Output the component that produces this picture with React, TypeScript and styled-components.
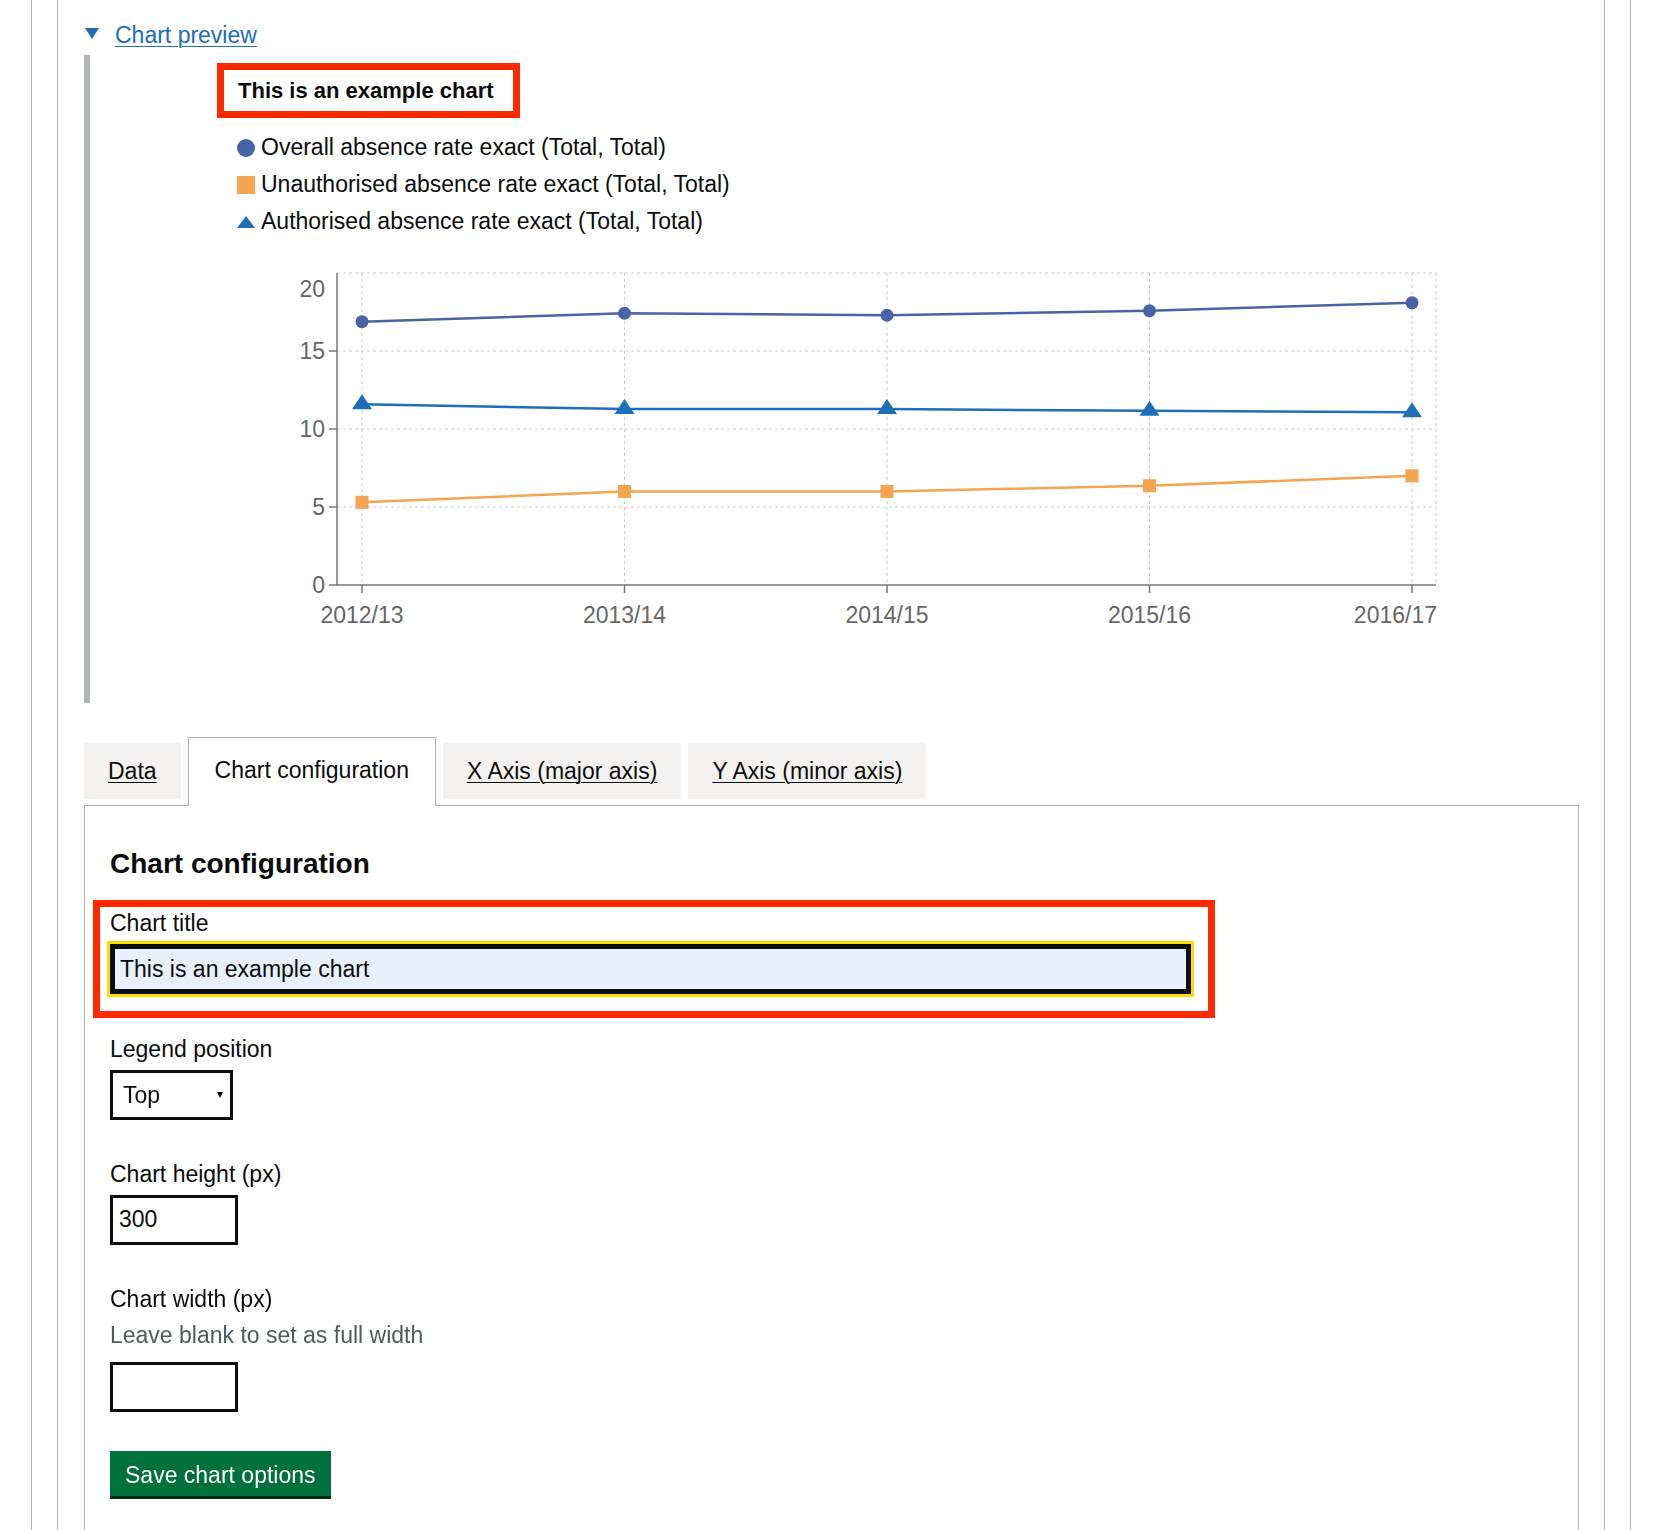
import React from "react";
import styled, { createGlobalStyle } from "styled-components";

const GlobalStyle = createGlobalStyle`
  html, body { margin: 0; padding: 0; background: #ffffff; }
  body {
    font-family: "Liberation Sans", Arial, sans-serif;
    color: #0b0c0c;
  }
  *, *::before, *::after { box-sizing: border-box; }
`;

const Page = styled.div`
  height: 1530px;
  overflow: hidden;
  padding-left: 31px;
`;

const OuterFrame = styled.div`
  width: 1600px;
  height: 100%;
  border-left: 1px solid #b1b4b6;
  border-right: 1px solid #b1b4b6;
  padding: 0 25px;
`;

const InnerFrame = styled.div`
  height: 100%;
  border-left: 1px solid #b1b4b6;
  border-right: 1px solid #b1b4b6;
  padding: 20px 25px 0 26px;
`;

/* ---------- Details / chart preview ---------- */

const Details = styled.details`
  display: block;
  margin: 0 0 40px;
`;

const Summary = styled.summary`
  display: block;
  position: relative;
  padding-left: 31px;
  margin-bottom: 4px;
  font-size: 23px;
  line-height: 31px;
  color: #1d70b8;
  cursor: pointer;
  list-style: none;

  &::-webkit-details-marker {
    display: none;
  }

  &::before {
    content: "";
    position: absolute;
    left: 1px;
    top: 8px;
    border-style: solid;
    border-width: 11px 7.5px 0 7.5px;
    border-color: #1d70b8 transparent transparent transparent;
  }
`;

const SummaryText = styled.span`
  text-decoration: underline;
  text-decoration-thickness: 1px;
  text-underline-offset: 3px;
`;

const DetailsBody = styled.div`
  border-left: 6px solid #b1b4b6;
  padding: 8px 0 63px 127px;
`;

const ChartTitle = styled.h3`
  display: block;
  width: fit-content;
  margin: 0;
  border: 7px solid #ff2a00;
  padding: 5px 19px 5px 14px;
  font-size: 22px;
  font-weight: 700;
  line-height: 31px;
`;

const Legend = styled.ul`
  list-style: none;
  margin: 11px 0 0 20px;
  padding: 0;
`;

const LegendItem = styled.li`
  display: flex;
  align-items: center;
  gap: 6px;
  height: 37px;
  font-size: 23px;
  line-height: 31px;
`;

const ChartSvg = styled.svg`
  display: block;
  margin: 10px 0 0 20px;
  font-family: "Liberation Sans", Arial, sans-serif;
  overflow: visible;
`;

/* ---------- Tabs ---------- */

const TabList = styled.ul`
  display: flex;
  align-items: flex-start;
  list-style: none;
  margin: 0;
  padding: 0;
`;

const Tab = styled.li<{ $active?: boolean }>`
  margin-right: 7px;
  font-size: 23px;
  line-height: 31px;
  background: ${(p) => (p.$active ? "#ffffff" : "#f3f2f1")};
  padding: ${(p) => (p.$active ? "17px 26px 20px" : "12.5px 24px")};
  border: ${(p) => (p.$active ? "1px solid #b1b4b6" : "0")};
  border-bottom: 0;
  margin-top: ${(p) => (p.$active ? "-6px" : "0")};
  margin-bottom: ${(p) => (p.$active ? "-1px" : "0")};
  position: relative;
  z-index: ${(p) => (p.$active ? 1 : 0)};
`;

const TabLink = styled.a<{ $active?: boolean }>`
  color: #0b0c0c;
  text-decoration: ${(p) => (p.$active ? "none" : "underline")};
  text-decoration-thickness: 1px;
  text-underline-offset: 3px;
  cursor: pointer;
`;

const Panel = styled.div`
  border: 1px solid #b1b4b6;
  padding: 40px 25px 40px;
`;

const PanelHeading = styled.h2`
  margin: 0 0 18px;
  font-size: 28px;
  font-weight: 700;
  line-height: 36px;
`;

/* ---------- Form ---------- */

const HighlightGroup = styled.div`
  width: fit-content;
  margin: 0 0 15.5px -17px;
  border: 7px solid #ff2a00;
  padding: 1px 17px 17px 10px;
`;

const FormGroup = styled.div`
  margin-bottom: 39px;
`;

const Label = styled.label`
  display: block;
  margin-bottom: 5px;
  font-size: 23px;
  line-height: 31px;
`;

const Hint = styled.div`
  margin: 3px 0 11px;
  font-size: 23px;
  line-height: 31px;
  color: #505a5f;
`;

const TextInput = styled.input<{ $width: number }>`
  display: block;
  width: ${(p) => p.$width}px;
  height: 50px;
  margin: 0;
  border: 3px solid #0b0c0c;
  border-radius: 0;
  padding: 0 6px;
  font-family: inherit;
  font-size: 23px;
  color: #0b0c0c;
  background: #ffffff;
`;

const FocusedInput = styled.input`
  display: block;
  width: 1081px;
  height: 50px;
  margin: 0;
  border: 5px solid #0b0c0c;
  border-radius: 0;
  outline: 3px solid #ffdd00;
  outline-offset: 0;
  padding: 0 5px;
  font-family: inherit;
  font-size: 23px;
  color: #0b0c0c;
  caret-color: #0b0c0c;
  background: #e8f0fe;

  &:focus {
    outline: 3px solid #ffdd00;
  }
`;

const SelectWrap = styled.div`
  position: relative;
  width: fit-content;

  &::after {
    content: "";
    position: absolute;
    right: 10px;
    top: 22px;
    border-style: solid;
    border-width: 6px 3.5px 0 3.5px;
    border-color: #0b0c0c transparent transparent transparent;
    pointer-events: none;
  }
`;

const Select = styled.select`
  display: block;
  width: 123px;
  height: 50px;
  margin: 0;
  border: 3px solid #0b0c0c;
  border-radius: 0;
  padding: 0 24px 0 10px;
  font-family: inherit;
  font-size: 23px;
  color: #0b0c0c;
  background: #ffffff;
  appearance: none;
  -webkit-appearance: none;
`;

const Button = styled.button`
  display: block;
  margin: 0;
  border: 0;
  border-radius: 0;
  padding: 9px 15px 5px;
  font-family: inherit;
  font-size: 23px;
  line-height: 31px;
  color: #ffffff;
  background: #00703c;
  box-shadow: 0 3px 0 #002d18;
  cursor: pointer;
`;

/* ---------- Data ---------- */

type Shape = "circle" | "square" | "triangle";

const categories = ["2012/13", "2013/14", "2014/15", "2015/16", "2016/17"];

const series: { name: string; color: string; shape: Shape; values: number[] }[] = [
  {
    name: "Overall absence rate exact (Total, Total)",
    color: "#4a62a8",
    shape: "circle",
    values: [16.88, 17.42, 17.29, 17.58, 18.09],
  },
  {
    name: "Unauthorised absence rate exact (Total, Total)",
    color: "#f5a450",
    shape: "square",
    values: [5.3, 6.0, 6.0, 6.36, 7.0],
  },
  {
    name: "Authorised absence rate exact (Total, Total)",
    color: "#1d70b8",
    shape: "triangle",
    values: [11.58, 11.28, 11.28, 11.17, 11.07],
  },
];

const AXIS_X = 100;
const PLOT_TOP = 23;
const PLOT_BOTTOM = 335;
const PLOT_RIGHT = 1199;
const xOf = (i: number) => 125 + i * 262.5;
const yOf = (v: number) => PLOT_BOTTOM - v * 15.6;

const LegendMarker: React.FC<{ shape: Shape; color: string }> = ({ shape, color }) => (
  <svg width="18" height="18" viewBox="0 0 18 18" aria-hidden="true">
    {shape === "circle" && <circle cx="9" cy="9" r="9" fill={color} />}
    {shape === "square" && <rect x="0" y="0" width="18" height="18" fill={color} />}
    {shape === "triangle" && <polygon points="9,3 18,15 0,15" fill={color} />}
  </svg>
);

const PointMarker: React.FC<{ shape: Shape; color: string; x: number; y: number }> = ({
  shape,
  color,
  x,
  y,
}) => {
  if (shape === "circle") return <circle cx={x} cy={y} r={6.5} fill={color} />;
  if (shape === "square") return <rect x={x - 6.5} y={y - 6.5} width={13} height={13} fill={color} />;
  return (
    <polygon
      points={`${x},${y - 10} ${x + 10},${y + 5} ${x - 10},${y + 5}`}
      fill={color}
    />
  );
};

const LineChart: React.FC = () => {
  const yTicks = [
    { v: 0, labelY: PLOT_BOTTOM },
    { v: 5, labelY: yOf(5) },
    { v: 10, labelY: yOf(10) },
    { v: 15, labelY: yOf(15) },
    { v: 20, labelY: 39 },
  ];
  return (
    <ChartSvg width={1225} height={390} viewBox="0 0 1225 390">
      {/* grid */}
      <g stroke="#cccccc" strokeWidth={1} strokeDasharray="3 3" fill="none">
        {[20, 15, 10, 5].map((v) => (
          <line key={`h${v}`} x1={AXIS_X} x2={PLOT_RIGHT} y1={yOf(v)} y2={yOf(v)} />
        ))}
        {categories.map((c, i) => (
          <line key={`v${c}`} x1={xOf(i)} x2={xOf(i)} y1={PLOT_TOP} y2={PLOT_BOTTOM} />
        ))}
        <line x1={PLOT_RIGHT} x2={PLOT_RIGHT} y1={PLOT_TOP} y2={PLOT_BOTTOM} />
      </g>

      {/* axes */}
      <g stroke="#777777" strokeWidth={1.5}>
        <line x1={AXIS_X} x2={AXIS_X} y1={PLOT_TOP} y2={PLOT_BOTTOM} />
        <line x1={AXIS_X} x2={PLOT_RIGHT} y1={PLOT_BOTTOM} y2={PLOT_BOTTOM} />
        {[0, 5, 10, 15].map((v) => (
          <line key={`yt${v}`} x1={AXIS_X - 8} x2={AXIS_X} y1={yOf(v)} y2={yOf(v)} />
        ))}
        {categories.map((c, i) => (
          <line key={`xt${c}`} x1={xOf(i)} x2={xOf(i)} y1={PLOT_BOTTOM} y2={PLOT_BOTTOM + 8} />
        ))}
      </g>

      {/* tick labels */}
      <g fill="#666666" fontSize={23}>
        {yTicks.map((t) => (
          <text key={`yl${t.v}`} x={88} y={t.labelY + 8} textAnchor="end">
            {t.v}
          </text>
        ))}
        {categories.map((c, i) => {
          const last = i === categories.length - 1;
          return (
            <text
              key={`xl${c}`}
              x={last ? 1200 : xOf(i)}
              y={373}
              textAnchor={last ? "end" : "middle"}
            >
              {c}
            </text>
          );
        })}
      </g>

      {/* series */}
      {series.map((s) => (
        <g key={s.name}>
          <polyline
            points={s.values.map((v, i) => `${xOf(i)},${yOf(v)}`).join(" ")}
            fill="none"
            stroke={s.color}
            strokeWidth={2.5}
          />
          {s.values.map((v, i) => (
            <PointMarker key={i} shape={s.shape} color={s.color} x={xOf(i)} y={yOf(v)} />
          ))}
        </g>
      ))}
    </ChartSvg>
  );
};

const tabs = [
  { label: "Data", active: false },
  { label: "Chart configuration", active: true },
  { label: "X Axis (major axis)", active: false },
  { label: "Y Axis (minor axis)", active: false },
];

export default function App() {
  const titleRef = React.useRef<HTMLInputElement>(null);

  React.useEffect(() => {
    const el = titleRef.current;
    if (el) {
      el.focus();
      const end = el.value.length;
      el.setSelectionRange(end, end);
    }
  }, []);

  return (
    <>
      <GlobalStyle />
      <Page>
        <OuterFrame>
          <InnerFrame>
            <Details open>
              <Summary>
                <SummaryText>Chart preview</SummaryText>
              </Summary>
              <DetailsBody>
                <ChartTitle>This is an example chart</ChartTitle>
                <Legend>
                  {series.map((s) => (
                    <LegendItem key={s.name}>
                      <LegendMarker shape={s.shape} color={s.color} />
                      <span>{s.name}</span>
                    </LegendItem>
                  ))}
                </Legend>
                <LineChart />
              </DetailsBody>
            </Details>

            <TabList>
              {tabs.map((t) => (
                <Tab key={t.label} $active={t.active}>
                  <TabLink $active={t.active}>{t.label}</TabLink>
                </Tab>
              ))}
            </TabList>

            <Panel>
              <PanelHeading>Chart configuration</PanelHeading>

              <HighlightGroup>
                <Label htmlFor="chart-title">Chart title</Label>
                <FocusedInput
                  ref={titleRef}
                  id="chart-title"
                  type="text"
                  defaultValue="This is an example chart"
                />
              </HighlightGroup>

              <FormGroup>
                <Label htmlFor="legend-position">Legend position</Label>
                <SelectWrap>
                  <Select id="legend-position" defaultValue="top">
                    <option value="top">Top</option>
                    <option value="bottom">Bottom</option>
                    <option value="none">None</option>
                  </Select>
                </SelectWrap>
              </FormGroup>

              <FormGroup>
                <Label htmlFor="chart-height">Chart height (px)</Label>
                <TextInput id="chart-height" type="text" $width={128} defaultValue="300" />
              </FormGroup>

              <FormGroup>
                <Label htmlFor="chart-width">Chart width (px)</Label>
                <Hint>Leave blank to set as full width</Hint>
                <TextInput id="chart-width" type="text" $width={128} defaultValue="" />
              </FormGroup>

              <Button type="button">Save chart options</Button>
            </Panel>
          </InnerFrame>
        </OuterFrame>
      </Page>
    </>
  );
}
